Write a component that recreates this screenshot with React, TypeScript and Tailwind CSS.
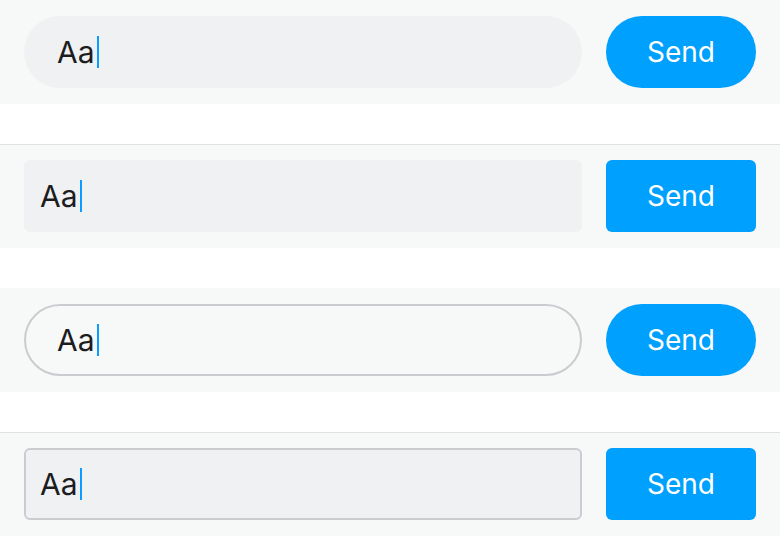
type Variant = {
  pill: boolean;
  outlined: boolean;
  topBorder: boolean;
};

const variants: Variant[] = [
  { pill: true, outlined: false, topBorder: false },
  { pill: false, outlined: false, topBorder: true },
  { pill: true, outlined: true, topBorder: false },
  { pill: false, outlined: true, topBorder: true },
];

const ComposerBar: React.FC<Variant> = ({ pill, outlined, topBorder }) => {
  // border-2 eats 2px, so outlined inputs get less left padding
  let inputStyle = "";
  if (pill && !outlined) inputStyle = "rounded-full pl-[33px] bg-[#f0f1f3]";
  if (!pill && !outlined) inputStyle = "rounded-md pl-[16px] bg-[#f0f1f3]";
  if (pill && outlined) inputStyle = "rounded-full pl-[31px] border-2 border-[#c9cdd0] bg-transparent";
  if (!pill && outlined) inputStyle = "rounded-md pl-[14px] border-2 border-[#c9cdd0] bg-[#f0f1f3]";

  return (
    <div
      className={
        topBorder
          ? "flex h-[104px] items-start gap-6 border-t border-[#dfe2e3] bg-[#f7f8f8] px-6 pt-[15px]"
          : "flex h-[104px] items-start gap-6 bg-[#f7f8f8] px-6 pt-4"
      }
    >
      <div className={`flex h-[72px] flex-1 items-center ${inputStyle}`}>
        <span className="text-[30px] leading-none text-[#1c1d1f]">Aa</span>
        <span className="ml-[2px] h-8 w-[2px] bg-[#0a9cff]" />
      </div>
      <button
        className={`flex h-[72px] w-[150px] items-center justify-center bg-[#00a0ff] text-[28px] text-white ${
          pill ? "rounded-full" : "rounded-md"
        }`}
      >
        Send
      </button>
    </div>
  );
};

export default function App() {
  return (
    <div
      className="flex h-[536px] w-[780px] flex-col gap-10 overflow-hidden bg-white"
      style={{ fontFamily: "Inter, 'Noto Sans', sans-serif" }}
    >
      {variants.map((v, i) => (
        <ComposerBar key={i} {...v} />
      ))}
    </div>
  );
}
